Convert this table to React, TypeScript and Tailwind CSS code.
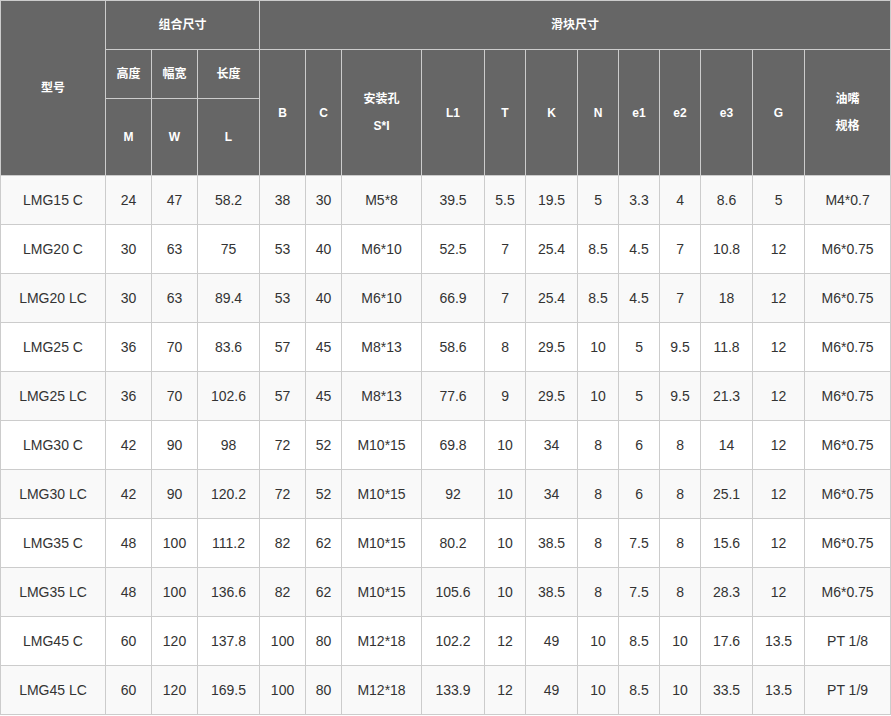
import React from "react";

const rows: string[][] = [
  ["LMG15 C", "24", "47", "58.2", "38", "30", "M5*8", "39.5", "5.5", "19.5", "5", "3.3", "4", "8.6", "5", "M4*0.7"],
  ["LMG20 C", "30", "63", "75", "53", "40", "M6*10", "52.5", "7", "25.4", "8.5", "4.5", "7", "10.8", "12", "M6*0.75"],
  ["LMG20 LC", "30", "63", "89.4", "53", "40", "M6*10", "66.9", "7", "25.4", "8.5", "4.5", "7", "18", "12", "M6*0.75"],
  ["LMG25 C", "36", "70", "83.6", "57", "45", "M8*13", "58.6", "8", "29.5", "10", "5", "9.5", "11.8", "12", "M6*0.75"],
  ["LMG25 LC", "36", "70", "102.6", "57", "45", "M8*13", "77.6", "9", "29.5", "10", "5", "9.5", "21.3", "12", "M6*0.75"],
  ["LMG30 C", "42", "90", "98", "72", "52", "M10*15", "69.8", "10", "34", "8", "6", "8", "14", "12", "M6*0.75"],
  ["LMG30 LC", "42", "90", "120.2", "72", "52", "M10*15", "92", "10", "34", "8", "6", "8", "25.1", "12", "M6*0.75"],
  ["LMG35 C", "48", "100", "111.2", "82", "62", "M10*15", "80.2", "10", "38.5", "8", "7.5", "8", "15.6", "12", "M6*0.75"],
  ["LMG35 LC", "48", "100", "136.6", "82", "62", "M10*15", "105.6", "10", "38.5", "8", "7.5", "8", "28.3", "12", "M6*0.75"],
  ["LMG45 C", "60", "120", "137.8", "100", "80", "M12*18", "102.2", "12", "49", "10", "8.5", "10", "17.6", "13.5", "PT 1/8"],
  ["LMG45 LC", "60", "120", "169.5", "100", "80", "M12*18", "133.9", "12", "49", "10", "8.5", "10", "33.5", "13.5", "PT 1/9"],
];

const widths = [105, 46, 46, 62, 46, 36, 80, 63, 41, 52, 41, 41, 41, 52, 52, 86];

const th = "border border-[#cccccc] bg-[#666666] text-white font-bold text-[12px] text-center align-middle p-0";

export default function App() {
  return (
    <div className="w-[891px] bg-white" style={{ fontFamily: '"Liberation Sans", Arial, "Noto Sans CJK SC", sans-serif' }}>
      <table className="border-collapse table-fixed w-[891px]">
        <colgroup>
          {widths.map((w, i) => (
            <col key={i} style={{ width: w }} />
          ))}
        </colgroup>
        <thead>
          <tr className="h-[49px]">
            <th rowSpan={3} className={th}>型号</th>
            <th colSpan={3} className={th}>组合尺寸</th>
            <th colSpan={12} className={th}>滑块尺寸</th>
          </tr>
          <tr className="h-[49px]">
            <th className={th}>高度</th>
            <th className={th}>幅宽</th>
            <th className={th}>长度</th>
            <th rowSpan={2} className={th}>B</th>
            <th rowSpan={2} className={th}>C</th>
            <th rowSpan={2} className={th}>
              <div className="leading-[27px]">安装孔</div>
              <div className="leading-[27px]">S*I</div>
            </th>
            <th rowSpan={2} className={th}>L1</th>
            <th rowSpan={2} className={th}>T</th>
            <th rowSpan={2} className={th}>K</th>
            <th rowSpan={2} className={th}>N</th>
            <th rowSpan={2} className={th}>e1</th>
            <th rowSpan={2} className={th}>e2</th>
            <th rowSpan={2} className={th}>e3</th>
            <th rowSpan={2} className={th}>G</th>
            <th rowSpan={2} className={th}>
              <div className="leading-[27px]">油嘴</div>
              <div className="leading-[27px]">规格</div>
            </th>
          </tr>
          <tr className="h-[77px]">
            <th className={th}>M</th>
            <th className={th}>W</th>
            <th className={th}>L</th>
          </tr>
        </thead>
        <tbody>
          {rows.map((r, i) => (
            <tr key={i} className={i % 2 === 0 ? "h-[49px] bg-[#f9f9f9]" : "h-[49px] bg-white"}>
              {r.map((c, j) => (
                <td key={j} className="border border-[#cccccc] text-center align-middle text-[14px] text-[#333333] p-0">
                  {c}
                </td>
              ))}
            </tr>
          ))}
        </tbody>
      </table>
    </div>
  );
}
